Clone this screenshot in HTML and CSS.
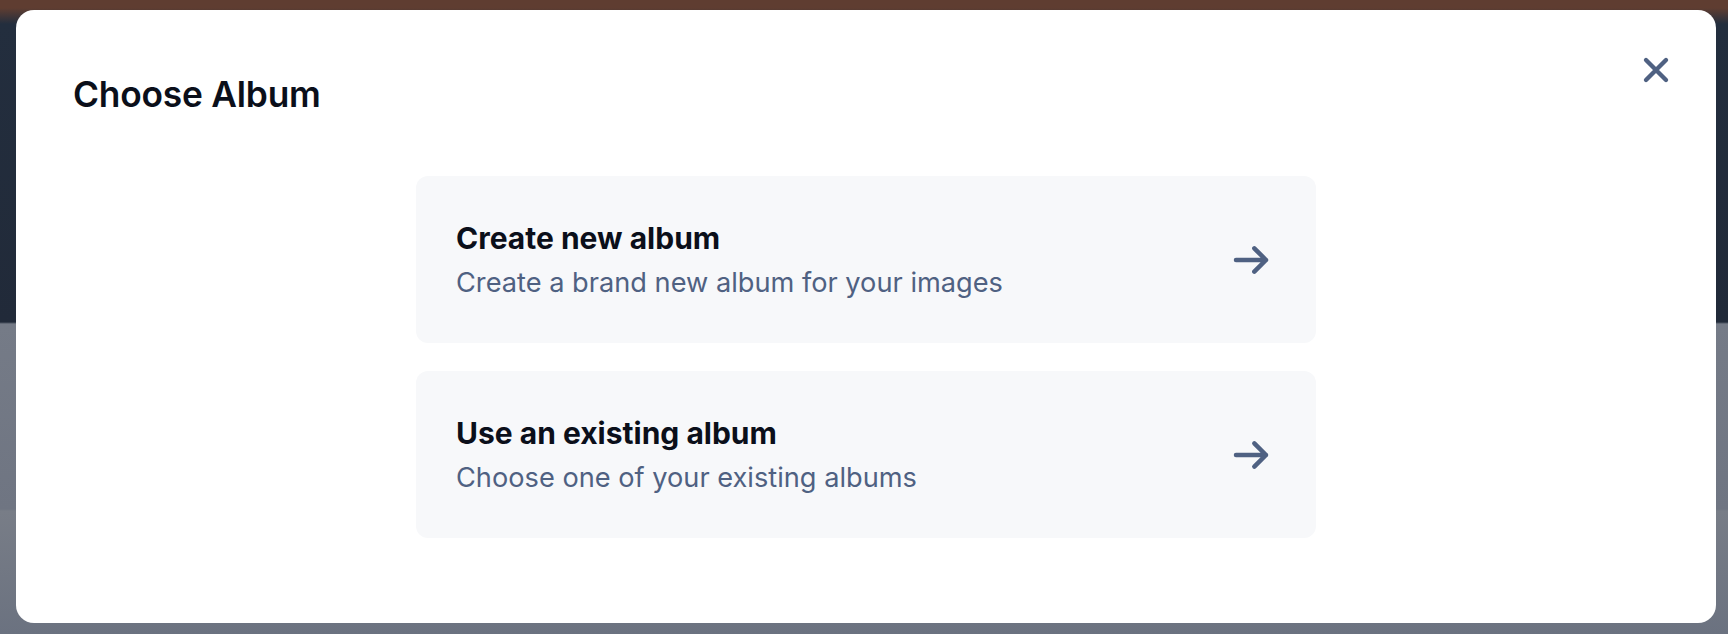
FILE: index.html
```html
<!DOCTYPE html>
<html lang="en">

<head>
    <meta charset="UTF-8">
    <meta name="viewport" content="width=device-width, initial-scale=1.0">
    <title>Choose Album</title>
    <link rel="stylesheet" href="styles.css">
</head>

<body>
    <div class="backdrop">
        <div class="modal">
            <div class="modal-header">
                <h2 class="modal-title">Choose Album</h2>
                <button class="close-btn" type="button" aria-label="Close">
                    <svg viewBox="0 0 24 24" width="40" height="40" fill="none" stroke="currentColor" stroke-width="2.6"
                        stroke-linecap="round" stroke-linejoin="round">
                        <path d="M6 18L18 6M6 6l12 12" />
                    </svg>
                </button>
            </div>

            <div class="option-list">
                <a class="option-card" href="#">
                    <div class="option-text">
                        <div class="option-title">Create new album</div>
                        <div class="option-desc">Create a brand new album for your images</div>
                    </div>
                    <svg class="option-arrow" viewBox="0 0 24 24" width="40" height="40" fill="none"
                        stroke="currentColor" stroke-width="2.7" stroke-linecap="round" stroke-linejoin="round">
                        <path d="M14 5l7 7m0 0l-7 7m7-7H3" />
                    </svg>
                </a>

                <a class="option-card" href="#">
                    <div class="option-text">
                        <div class="option-title">Use an existing album</div>
                        <div class="option-desc">Choose one of your existing albums</div>
                    </div>
                    <svg class="option-arrow" viewBox="0 0 24 24" width="40" height="40" fill="none"
                        stroke="currentColor" stroke-width="2.7" stroke-linecap="round" stroke-linejoin="round">
                        <path d="M14 5l7 7m0 0l-7 7m7-7H3" />
                    </svg>
                </a>
            </div>
        </div>
    </div>
</body>

</html>
```

FILE: styles.css
```css
:root {
    --text-dark: #0b0f1a;
    --text-muted: #4f6182;
    --card-bg: #f7f8fa;
}

* {
    margin: 0;
    padding: 0;
    box-sizing: border-box;
}

body {
    font-family: Inter, "Noto Sans", Arial, sans-serif;
    height: 100vh;
    overflow: hidden;
    background: linear-gradient(to bottom,
            #5f3d31 0px,
            #5f3d31 8px,
            #232e3e 24px,
            #212a39 322px,
            #757b87 324px,
            #6f7582 509px,
            #787d87 511px,
            #6b7280 634px);
}

.backdrop {
    height: 100%;
    padding: 10px 12px 11px 16px;
}

.modal {
    height: 100%;
    background-color: #ffffff;
    border-radius: 18px;
    padding: 50px 48px 0 57px;
}

.modal-header {
    display: flex;
    justify-content: space-between;
    align-items: flex-start;
}

.modal-title {
    color: var(--text-dark);
    font-size: 35.3px;
    font-weight: 600;
    letter-spacing: -0.2px;
    margin-top: 13px;
}

.close-btn {
    background: none;
    border: none;
    color: var(--text-muted);
    display: flex;
    cursor: pointer;
    margin-top: -10px;
    margin-right: -8px;
}

.option-list {
    display: flex;
    flex-direction: column;
    align-items: center;
    gap: 28px;
    margin-top: 60px;
    margin-left: -9px;
}

.option-card {
    width: 900px;
    height: 167px;
    background-color: var(--card-bg);
    border-radius: 12px;
    padding: 0 45px 0 40px;
    display: flex;
    align-items: center;
    justify-content: space-between;
    text-decoration: none;
}

.option-title {
    color: var(--text-dark);
    font-size: 30px;
    font-weight: 700;
}

.option-desc {
    color: var(--text-muted);
    font-size: 27.2px;
    margin-top: 10px;
}

.option-arrow {
    color: var(--text-muted);
}
```
